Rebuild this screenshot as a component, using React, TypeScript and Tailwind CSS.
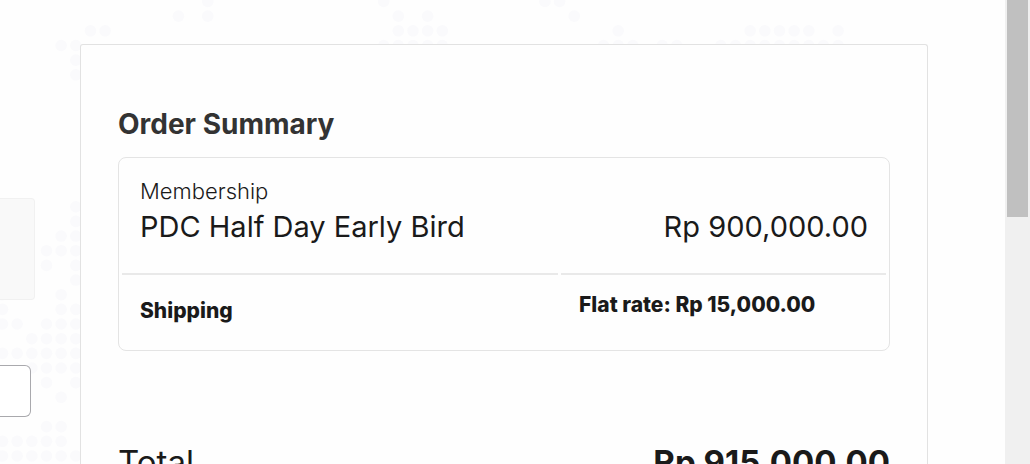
const PITCH = 14.66;

// Columns filled with a dot, keyed by row of the background map.
const dotRows: [number, number[]][] = [
  [0, [14, 26, 37, 38]],
  [1, [12, 14, 27, 29, 39]],
  [2, [6, 7, 27, 28, 29, 30, 42, 51, 52, 53, 54, 55, 57]],
  [3, [4, 5, 26, 27, 28, 29, 30, 41, 42, 43, 45, 46, 49, 50, 51, 52, 53, 54, 55, 56, 57]],
  [4, [5]],
  [5, [5]],
  [14, [5]],
  [15, [5]],
  [16, [4, 5]],
  [17, [3, 4, 5]],
  [18, [3, 5]],
  [19, [5]],
  [20, [0, 4]],
  [21, [0, 4, 5]],
  [22, [0, 1, 3, 4, 5]],
  [23, [2, 3, 4, 5]],
  [24, [0, 1, 2, 3, 4, 5]],
  [25, [2, 3, 4, 5]],
  [26, [3, 5]],
  [27, [4]],
  [29, [3, 4]],
  [30, [0, 1, 2, 3, 4]],
  [31, [0, 1, 2, 3, 4, 5]],
];

function DottedMap() {
  return (
    <svg className="pointer-events-none absolute inset-0 h-full w-full" aria-hidden="true">
      {dotRows.flatMap(([row, cols]) =>
        cols.map((col) => (
          <circle
            key={`${row}-${col}`}
            cx={2.5 + col * PITCH}
            cy={1.5 + row * PITCH}
            r={5.8}
            fill="#fafafc"
          />
        )),
      )}
    </svg>
  );
}

function OrderTable() {
  return (
    <table className="w-full table-fixed border-separate border-spacing-[3px] rounded-lg border border-[#e4e4e4] text-left">
      <colgroup>
        <col className="w-[57.3%]" />
        <col />
      </colgroup>
      <tbody>
        <tr className="h-[114px]">
          <td className="border-b-2 border-[#e9e9e9] px-[18px] pt-3.5 align-top">
            <div className="text-[22px] leading-8 font-light">Membership</div>
            <div className="text-[29px] leading-10">PDC Half Day Early Bird</div>
          </td>
          <td className="border-b-2 border-[#e9e9e9] px-[18px] pt-[46px] text-right align-top text-[29px] leading-10">
            Rp 900,000.00
          </td>
        </tr>
        <tr className="h-[69px] text-[21px] leading-8 font-extrabold">
          <th scope="row" className="px-[18px] pb-1 font-extrabold">
            Shipping
          </th>
          <td className="px-[18px] pt-[11px] align-top">Flat rate: Rp 15,000.00</td>
        </tr>
      </tbody>
    </table>
  );
}

export default function App() {
  return (
    <div className="relative flex h-screen overflow-hidden bg-[#fefefe] font-['Inter','Liberation_Sans',sans-serif] text-[#1a1a1a]">
      <DottedMap />
      <div className="relative w-20 shrink-0 pt-[198px]">
        <div className="h-[102px] w-[35px] rounded-r border border-l-0 border-[#f1f1f1] bg-[#f9f9f9]" />
        <input
          type="text"
          aria-label="Billing detail"
          className="mt-[65px] block h-[52px] w-[31px] rounded-r-md border border-l-0 border-[#a9a9ad] bg-white px-2 outline-none"
        />
      </div>
      <main className="relative mt-11 mr-[77px] min-w-0 flex-1 rounded-t-[3px] border border-b-0 border-[#e2e2e2] bg-[#fefefe] px-[37px] pt-[59px]">
        <h2 className="mb-[13px] text-[28px] leading-10 font-bold text-[#333]">Order Summary</h2>
        <OrderTable />
        <div className="mt-[91px] flex justify-between text-[33px] leading-10">
          <span>Total</span>
          <span className="font-bold">Rp 915,000.00</span>
        </div>
      </main>
      <div className="relative w-[25px] shrink-0 bg-[#f0f0f0] px-0.5">
        <div className="h-[217px] bg-[#c0c0c0]" />
      </div>
    </div>
  );
}
